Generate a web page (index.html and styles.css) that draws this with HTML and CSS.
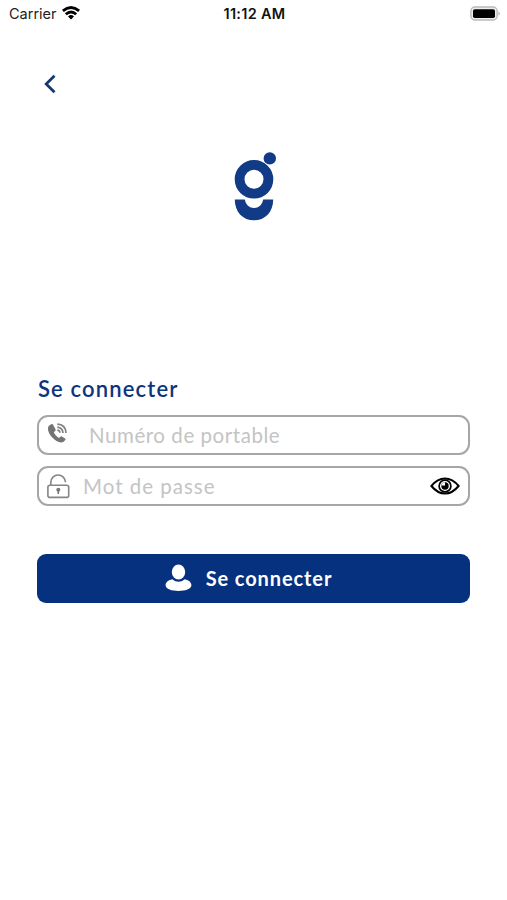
FILE: index.html
```html
<!DOCTYPE html>
<html lang="fr">
<head>
<meta charset="utf-8">
<title>Se connecter</title>
<link rel="stylesheet" href="styles.css">
</head>
<body>
<header class="status">
  <div class="carrier"><span>Carrier</span>
    <svg class="wifi" width="18" height="14" viewBox="0 0 18 14" fill="none" stroke="#000" stroke-width="2.8"><path d="M.9 4.8Q9-1.8 17.1 4.8"/><path d="M3.8 8.3Q9 3.6 14.2 8.3"/><path d="M9 13.4 6 10.4Q9 7.8 12 10.4Z" fill="#000" stroke="none"/></svg>
  </div>
  <time class="time">11:12 AM</time>
  <svg class="battery" width="30" height="16" viewBox="0 0 30 16"><rect x=".9" y="1" width="26.2" height="13" rx="4" fill="#eee" stroke="#bbb" stroke-width="1.4"/><rect x="3" y="3.2" width="22" height="8.8" rx="1.8" fill="#000"/><path d="M28.5 5.2q2.5 2.3 0 4.6z" fill="#aaa"/></svg>
</header>
<main class="page">
  <button class="back" aria-label="Retour"><svg width="12" height="20" viewBox="0 0 12 20" fill="none" stroke="#143873" stroke-width="2.8"><path d="M10.5 1.8 2.2 10l8.3 8.2"/></svg></button>
  <svg class="logo" width="44" height="70" viewBox="0 0 44 70"><circle cx="20" cy="27.3" r="14.4" fill="none" stroke="#113a87" stroke-width="9.8"/><circle cx="35.8" cy="6.4" r="6.2" fill="#113a87"/><path d="M.8 47.4H10.8A9.3 10.2 0 0 0 29.2 47.4H39.2C39.2 60 31 68.3 20 68.3S.8 60 .8 47.4Z" fill="#113a87"/></svg>
  <form class="form">
    <h1 class="title">Se connecter</h1>
    <label class="field">
      <svg class="phone" width="21" height="21" viewBox="0 0 21 21"><path d="M4.3 1.2 2.2 2.6C.1 4.5.7 9.4 4.8 14c4 4.7 9 6.5 11.8 4.7l1.7-1.8c.5-.6.4-1.1-.2-1.5l-3.2-2c-.6-.4-1.2-.2-1.6.3l-1.2 1.2c-1.2.2-5.4-4.4-5.1-5.8l1.2-1c.5-.5.6-.9.4-1.5L6.1 1.7c-.3-.8-1-1-1.8-.5Z" fill="#747474"/><g fill="none" stroke="#828282" stroke-width="1.7"><path d="M10.3 1.2Q18.6 1.5 19 10"/><path d="M10.3 4.2Q15.7 4.8 16 10"/><path d="M10.3 7.2Q12.8 7.4 13 9.8"/></g></svg>
      <input class="input tel" type="tel" placeholder="Numéro de portable">
    </label>
    <label class="field">
      <svg class="lock" width="23" height="25" viewBox="0 0 23 25" fill="none" stroke="#858585" stroke-width="1.6"><rect x=".9" y="11.2" width="20.8" height="12.2" rx="2"/><path d="M3.8 11V8.3a7.3 7.3 0 0 1 14.6 0"/><circle cx="11.3" cy="15.8" r="2" fill="#777" stroke="none"/><path d="M11.3 16v4" stroke="#777" stroke-width="1.6"/></svg>
      <input class="input pass" type="password" placeholder="Mot de passe">
      <svg class="eye" width="30" height="18" viewBox="0 0 30 18" fill="none" stroke="#000"><path d="M1.4 9Q7.5 1.5 15 1.5T28.6 9Q22.5 16.5 15 16.5T1.4 9Z" stroke-width="2"/><circle cx="15" cy="9" r="5.9" stroke-width="1.7"/><circle cx="15" cy="9" r="3.7" fill="#000" stroke="none"/><path d="M15 8.6V5.2A3.7 3.7 0 0 0 11.4 8.6Z" fill="#fff" stroke="none"/></svg>
    </label>
    <button class="submit" type="button"><svg width="27" height="28" viewBox="0 0 27 28" fill="#fff"><ellipse cx="13.5" cy="8" rx="6.7" ry="7.6"/><path d="M7.2 15.2Q13.5 20.2 19.8 15.2C24 16.2 26.4 18.4 26.4 21.2 26.4 28.8.6 28.8.6 21.2.6 18.4 3 16.2 7.2 15.2Z"/></svg><span>Se connecter</span></button>
  </form>
</main>
</body>
</html>
```

FILE: styles.css
```css
* { box-sizing: border-box; }
body { margin: 0; min-height: 900px; background: #fff; font-family: Lato, sans-serif; }
svg { display: block; flex: none; }
button { border: 0; padding: 0; background: none; font: inherit; }
.status { display: grid; grid-template-columns: 1fr auto 1fr; align-items: center; height: 27px; padding: 0 7px 0 9px; font: 14.5px/18px Inter, sans-serif; color: #222; }
.carrier { display: flex; align-items: center; gap: 5px; }
.wifi { margin-top: -1px; }
.time { font-weight: 600; font-size: 14.5px; letter-spacing: .3px; color: #111; }
.battery { justify-self: end; }
.page { display: flex; flex-direction: column; padding: 47px 37px 0; }
.back { width: 12px; height: 20px; margin-left: 7px; }
.logo { align-self: center; margin: 58px 0 0 5px; }
.form { display: flex; flex-direction: column; margin-top: 152px; }
.title { margin: 0; padding-left: 1px; height: 41px; font-size: 22px; line-height: 30px; font-weight: 600; letter-spacing: 1.15px; color: #0d347e; white-space: nowrap; }
.field { display: flex; align-items: center; height: 40px; margin-bottom: 11px; padding: 0 8px; border: 2px solid #a6a6a6; border-radius: 11px; }
.input { flex: 1; min-width: 0; padding: 0 0 1px; border: 0; outline: 0; background: none; font: 20.5px/30px Lato, sans-serif; }
.input::placeholder { color: #c4c4c4; opacity: 1; }
.phone { margin-top: -3px; }
.tel { margin-left: 21px; letter-spacing: .55px; }
.pass { margin-left: 13px; letter-spacing: 1px; }
.submit { display: flex; align-items: center; justify-content: center; gap: 14px; height: 49px; margin-top: 37px; padding: 0 10px 2px 0; border-radius: 9px; background: #06317f; color: #fff; font-size: 20px; font-weight: 700; letter-spacing: .9px; }
```
